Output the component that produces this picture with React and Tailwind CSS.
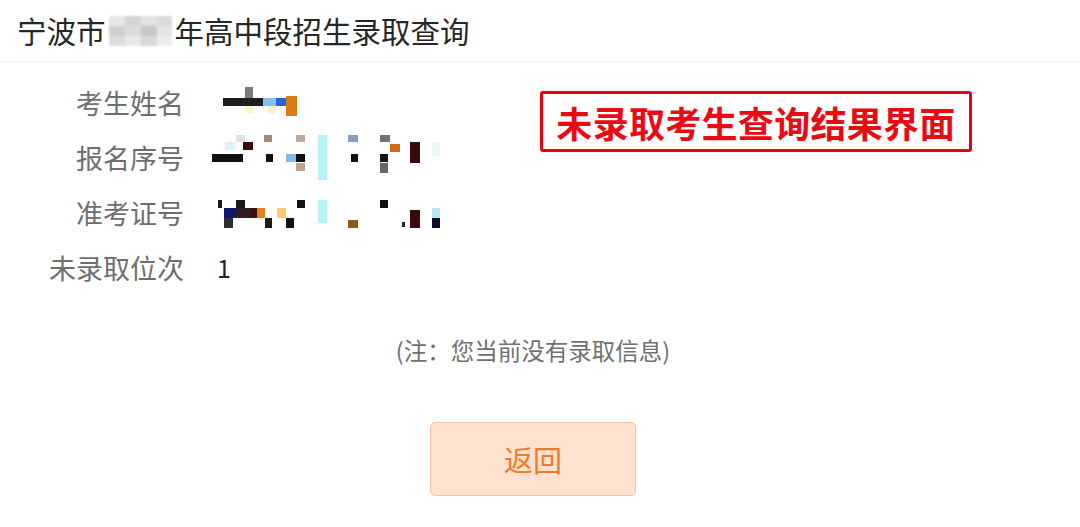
import React from "react";

const FONT = { fontFamily: '"Noto Sans CJK SC", "Noto Sans", sans-serif' };

function Mosaic({ w, h, cells, className = "" }) {
  return (
    <svg width={w} height={h} viewBox={`0 0 ${w} ${h}`} className={className}>
      {cells.map(([x, y, cw, ch, c], i) => (
        <rect key={i} x={x} y={y} width={cw} height={ch} fill={c} />
      ))}
    </svg>
  );
}

const titleCells = [
  [0, 0, 16, 10, "#e6e6e6"], [16, 0, 16, 10, "#d4d4d4"], [32, 0, 16, 10, "#e2e2e2"], [48, 0, 15, 10, "#dadada"],
  [0, 10, 16, 10, "#cfcfcf"], [16, 10, 16, 10, "#dcdcdc"], [32, 10, 16, 10, "#c8c8c8"], [48, 10, 15, 10, "#e4e4e4"],
  [0, 20, 16, 10, "#dddddd"], [16, 20, 16, 10, "#e8e8e8"], [32, 20, 16, 10, "#d8d8d8"], [48, 20, 15, 10, "#ececec"],
];

const nameCells = [
  [13, 15, 40, 8, "#1e1e1e"], [35, 4, 8, 11, "#7a7a7a"], [53, 15, 13, 8, "#82c0ee"], [66, 15, 10, 8, "#1c6ccc"],
  [76, 13, 11, 20, "#dc7a18"], [35, 23, 8, 7, "#f6f8c8"], [58, 23, 8, 7, "#f4f4d0"],
];
const regCells = [
  [2, 20, 31, 8, "#101010"], [33, 8, 10, 8, "#3a0a0c"], [15, 8, 10, 8, "#d8f6f8"], [26, 1, 9, 7, "#e0e0e0"],
  [54, 1, 8, 7, "#a48c72"], [56, 20, 7, 8, "#121212"], [86, 1, 9, 7, "#bcae9e"], [76, 20, 10, 8, "#84bcea"],
  [86, 20, 9, 8, "#121212"], [86, 29, 9, 8, "#b8a898"], [108, 1, 9, 45, "#b6f2f8"], [138, 1, 10, 7, "#8c9cc8"],
  [141, 20, 7, 8, "#121212"], [170, 1, 10, 7, "#707078"], [180, 10, 10, 8, "#d06a1a"], [170, 20, 8, 8, "#141414"],
  [170, 29, 8, 10, "#66666e"], [200, 8, 10, 21, "#3c0a0a"], [222, 8, 8, 14, "#eef8fc"],
];
const ticketCells = [
  [8, 7, 4, 8, "#1a1a1a"], [26, 7, 9, 8, "#181818"], [14, 15, 12, 10, "#121a70"], [26, 15, 14, 10, "#2a2222"],
  [40, 15, 7, 10, "#3a1010"], [47, 15, 8, 10, "#e28222"], [67, 15, 9, 10, "#f8ca74"], [14, 25, 9, 10, "#2e2e2e"],
  [55, 25, 7, 10, "#1c1c1c"], [76, 25, 8, 10, "#121212"], [87, 7, 8, 8, "#121212"], [108, 7, 9, 23, "#b6f2f8"],
  [138, 27, 10, 8, "#8c5a1c"], [170, 7, 8, 8, "#121212"], [192, 29, 3, 5, "#202020"], [200, 17, 10, 18, "#3c0a0a"],
  [222, 15, 8, 10, "#b8e6f6"], [222, 25, 8, 10, "#0a0e20"],
];

function Row({ label, children }) {
  return (
    <div className="flex h-[55px] items-center">
      <div className="w-[184px] text-right text-[27px] text-[#6e6e6e] leading-none">{label}</div>
      <div className="ml-[26px] flex items-center">{children}</div>
    </div>
  );
}

export default function App() {
  return (
    <div className="relative h-[527px] w-[1080px] overflow-hidden bg-white" style={FONT}>
      <div className="flex h-[62px] items-center border-b border-[#f2f2f2] pl-[17px] text-[29.5px] leading-none text-[#262626]">
        <span>宁波市</span>
        <Mosaic w={63} h={30} cells={titleCells} className="mx-[3px] blur-[1px]" />
        <span>年高中段招生录取查询</span>
      </div>

      <div className="relative pt-[13px]">
        <Row label="考生姓名">
          <Mosaic w={240} h={40} cells={nameCells} />
        </Row>
        <Row label="报名序号">
          <Mosaic w={240} h={48} cells={regCells} />
        </Row>
        <Row label="准考证号">
          <Mosaic w={240} h={40} cells={ticketCells} />
        </Row>
        <Row label="未录取位次">
          <span className="pl-[7px] text-[25px] leading-none text-[#222]">1</span>
        </Row>

        <div className="absolute left-[540px] top-[29px] flex h-[61px] w-[432px] items-center justify-center rounded-[3px] border-[3px] border-[#e60012]">
          <span className="text-[36px] font-bold leading-none tracking-[0.3px] text-[#ea0a14]">未录取考生查询结果界面</span>
        </div>
      </div>

      <div className="flex w-[1066px] flex-col items-center">
        <div className="mt-[40px] text-[23.5px] leading-[30px] text-[#707070]">(注：您当前没有录取信息)</div>
        <button className="mt-[57px] flex h-[74px] w-[206px] items-center justify-center rounded-[5px] border border-[#f8c29c] bg-[#fde2cf] text-[29px] leading-none text-[#ef7a2c]">
          返回
        </button>
      </div>
    </div>
  );
}
